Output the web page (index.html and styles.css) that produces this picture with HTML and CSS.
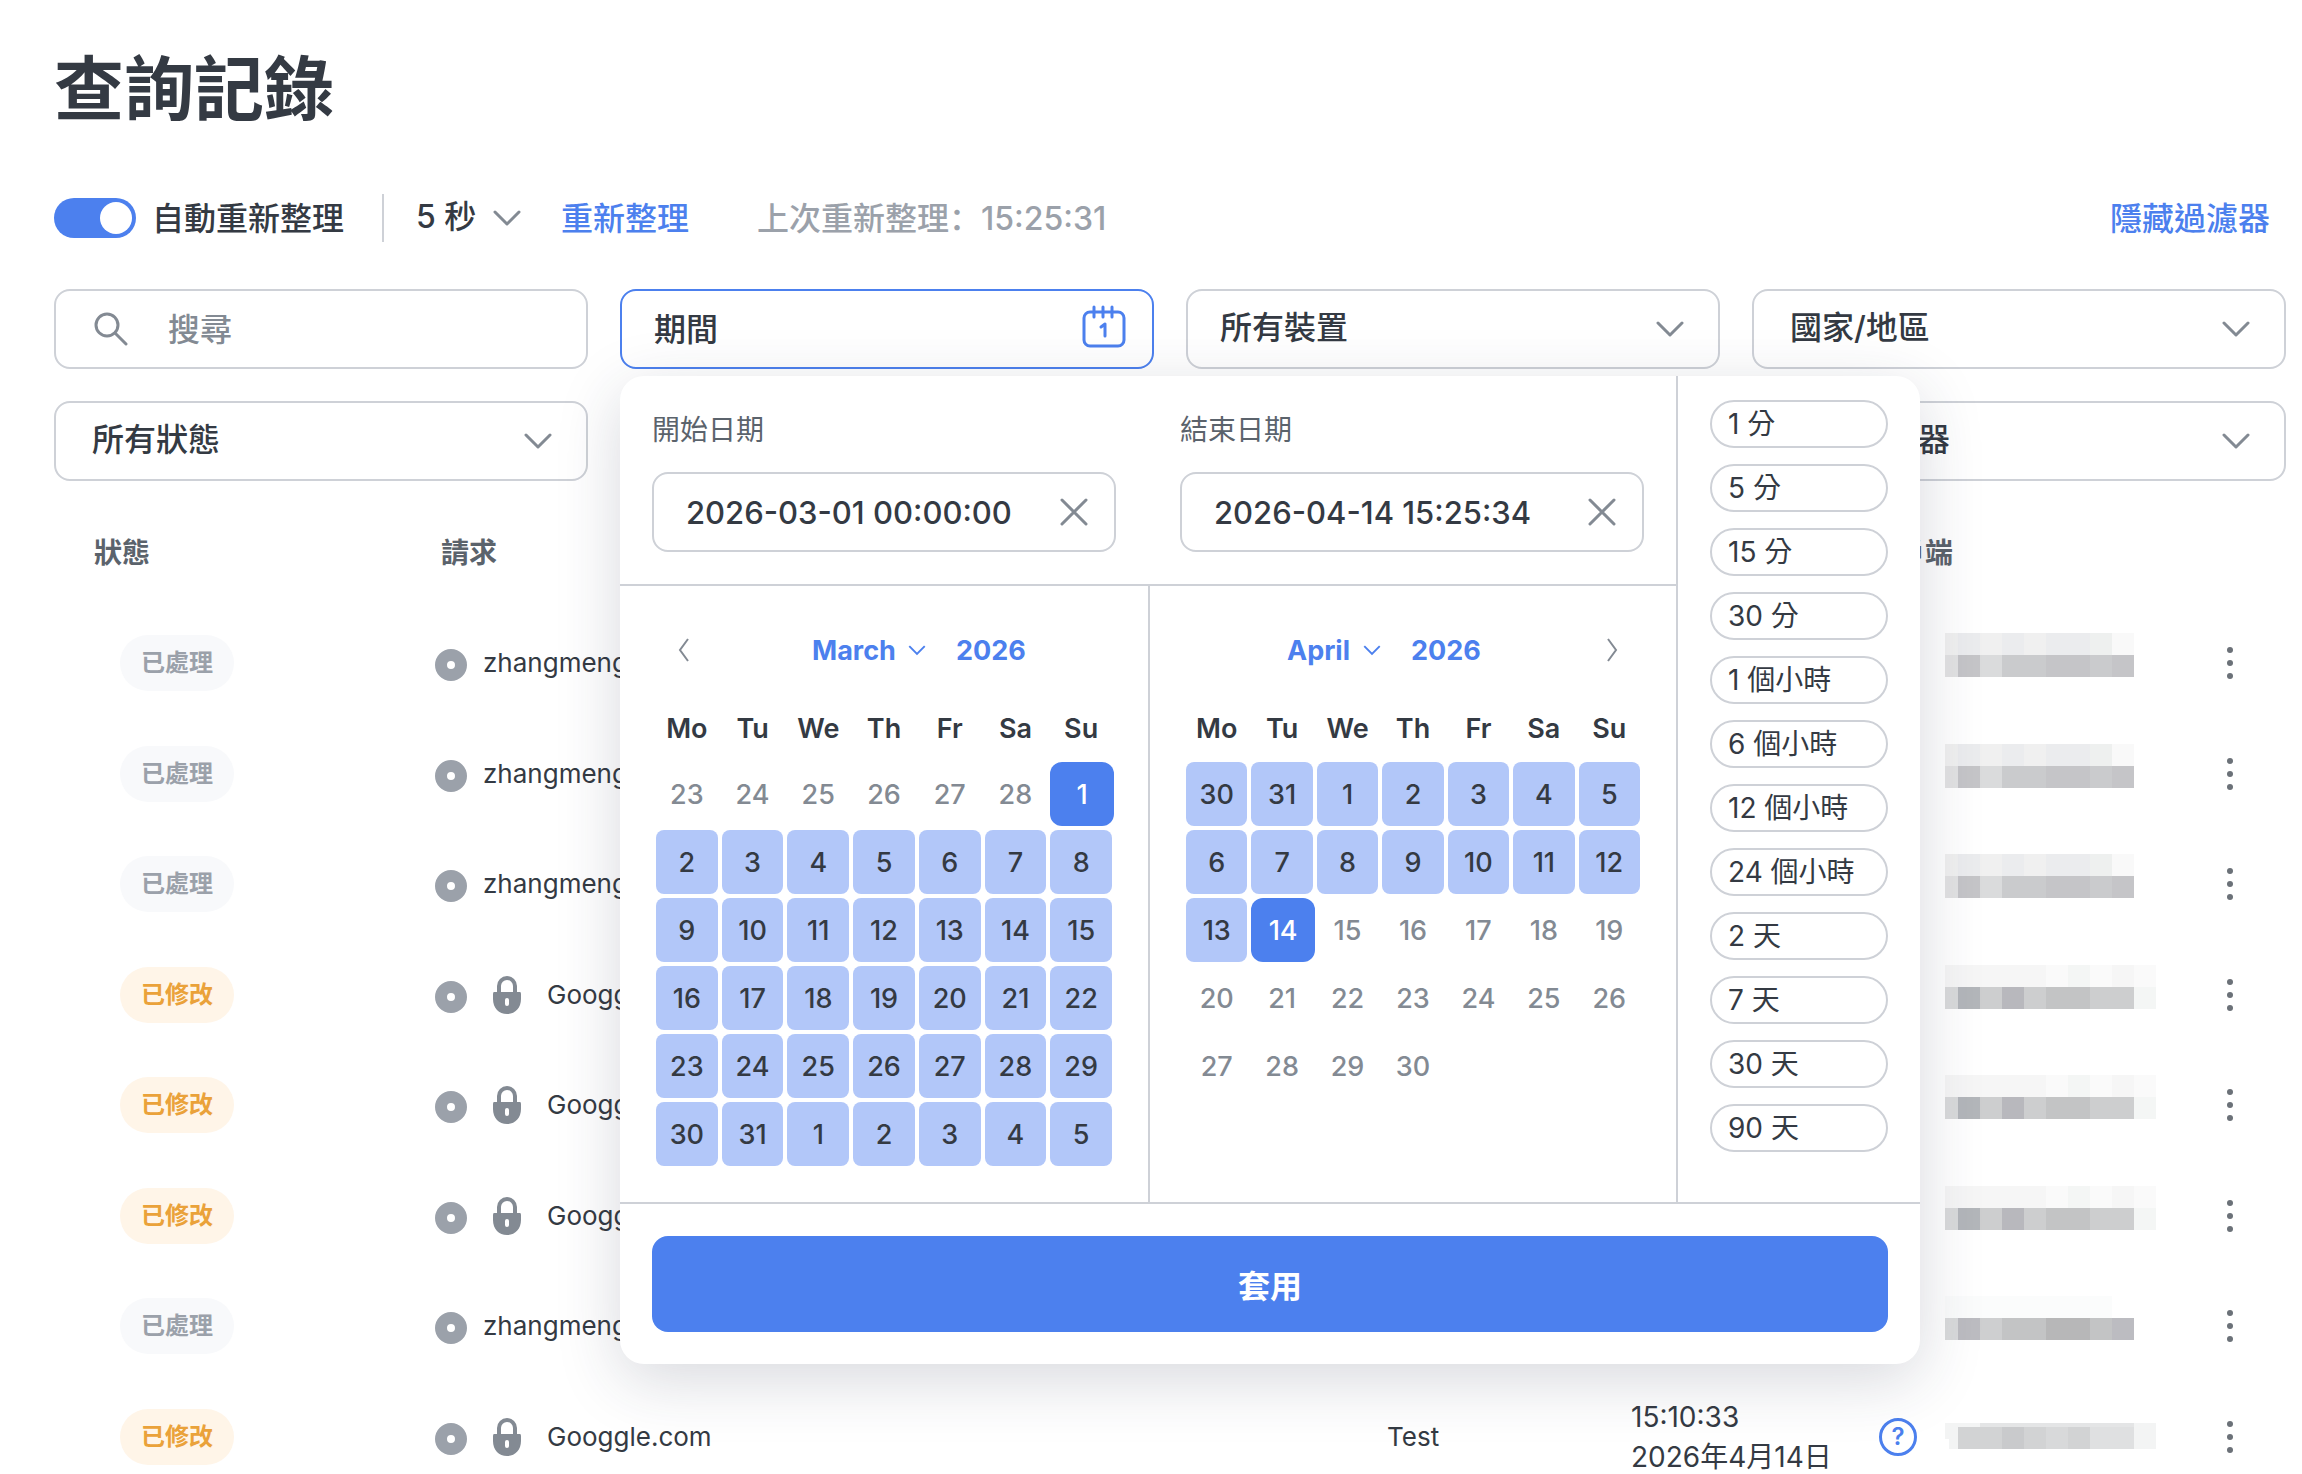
FILE: index.html
```html
<!DOCTYPE html>
<html lang="zh-Hant">
<head>
    <meta charset="UTF-8">
    <meta name="viewport" content="width=device-width, initial-scale=1.0">
    <title>查詢記錄</title>
    <link rel="stylesheet" href="styles.css">
</head>
<body>
    <!-- Shared icons -->
    <svg class="sprite" aria-hidden="true">
        <symbol id="chevron" viewBox="0 0 28 16"><path d="M2 2l12 12L26 2" /></symbol>
        <symbol id="close" viewBox="0 0 28 28"><path d="M2 2l24 24M26 2L2 26" /></symbol>
        <symbol id="site" viewBox="0 0 32 36">
            <path d="M16 4a16 16 0 1 0 0 32a16 16 0 1 0 0-32zM16 16a4 4 0 1 1 0 8a4 4 0 1 1 0-8z" />
        </symbol>
        <symbol id="lock" viewBox="0 0 28 38">
            <path class="shackle" d="M6 17V10a8 8 0 0 1 16 0v7" />
            <path d="M1 16h26q1 0 1 2v5c0 9-6 15-14 15S0 32 0 23v-5q0-2 1-2zM14 22a2 2 0 0 0-2 2v4a2 2 0 0 0 4 0v-4a2 2 0 0 0-2-2z" />
        </symbol>
        <symbol id="dots" viewBox="0 0 8 32">
            <circle cx="4" cy="3" r="3" /><circle cx="4" cy="16" r="3" /><circle cx="4" cy="29" r="3" />
        </symbol>
        <symbol id="mask-a" viewBox="0 0 211 60">
            <path fill="#f0f0f0" d="M0 0h13v22H0zM35 0h22v22H35zM79 0h22v22H79z" />
            <path fill="#ebecee" d="M13 0h22v22H13zM57 0h22v22H57zM101 0h44v22h-44z" />
            <path fill="#eef0ef" d="M145 0h22v22h-22z" />
            <path fill="#f9f9f9" d="M167 0h22v22h-22z" />
            <path fill="#e2e2e3" d="M0 22h13v22H0z" />
            <path fill="#dadbdc" d="M35 22h22v22H35z" />
            <path fill="#cacbcd" d="M57 22h44v22H57zM145 22h22v22h-22z" />
            <path fill="#c5c5c8" d="M13 22h22v22H13zM101 22h44v22h-44zM167 22h22v22h-22z" />
        </symbol>
        <symbol id="mask-b" viewBox="0 0 211 60">
            <path fill="#f6f6f6" d="M0 0h101v22H0zM167 0h22v22h-22z" />
            <path fill="#fafafa" d="M101 0h22v22h-22zM145 0h22v22h-22zM189 0h22v22h-22z" />
            <path fill="#f4f6f5" d="M123 0h22v22h-22zM189 22h22v22h-22z" />
            <path fill="#d9dadb" d="M0 22h13v22H0z" />
            <path fill="#b3b6ba" d="M13 22h22v22H13z" />
            <path fill="#cdcecf" d="M35 22h22v22H35zM79 22h22v22H79zM145 22h44v22h-44z" />
            <path fill="#b8b8bd" d="M57 22h22v22H57z" />
            <path fill="#c3c4c5" d="M101 22h44v22h-44z" />
        </symbol>
        <symbol id="mask-c" viewBox="0 0 211 60">
            <path fill="#fbfcfc" d="M0 0h167v22H0z" />
            <path fill="#d9dadb" d="M0 22h13v22H0z" />
            <path fill="#bcbcc1" d="M13 22h22v22H13zM167 22h22v22h-22z" />
            <path fill="#cecfd0" d="M35 22h22v22H35z" />
            <path fill="#c3c4c5" d="M57 22h44v22H57zM145 22h22v22h-22z" />
            <path fill="#b7b7b8" d="M101 22h44v22h-44z" />
        </symbol>
        <symbol id="mask-d" viewBox="0 0 211 60">
            <path fill="#f3f4f4" d="M0 16h211v26H4V32H0z" />
            <path fill="#e4e5e6" d="M35 16h154v4H35z" />
            <path fill="#d2d3d4" d="M13 20h44v22H13zM79 20h22v22H79zM123 20h22v22h-22z" />
            <path fill="#c9cacc" d="M57 20h22v22H57z" />
            <path fill="#d8d9da" d="M101 20h22v22h-22z" />
            <path fill="#dfe0e1" d="M145 20h44v22h-44z" />
        </symbol>
    </svg>

    <h1>查詢記錄</h1>

    <div class="toolbar">
        <label class="switch">
            <input type="checkbox" role="switch" checked>
            <span>自動重新整理</span>
        </label>
        <div class="interval">
            <select aria-label="間隔">
                <option>5 秒</option>
            </select>
            <svg class="chevron"><use href="#chevron" /></svg>
        </div>
        <a href="#" class="refresh">重新整理</a>
        <span class="updated" lang="zh-Hans">上次重新整理：15:25:31</span>
        <a href="#" class="hide-filters">隱藏過濾器</a>
    </div>

    <div class="filters">
        <label class="field search">
            <svg class="search-icon" viewBox="0 0 34 34"><circle cx="13" cy="13" r="11" /><path d="M21 21l11 11" /></svg>
            <input type="search" placeholder="搜尋" aria-label="搜尋">
        </label>

        <div class="period">
            <button type="button" class="field period-button">
                期間
                <svg class="calendar-icon" viewBox="0 0 44 44">
                    <rect x="2" y="7" width="40" height="34" rx="6" />
                    <path d="M12 2v10M21 2v10M30 2v10M19 22l4-3v12" />
                </svg>
            </button>

            <div class="popover">
                <div class="range">
                    <div class="dates">
                        <div class="date">
                            <label for="start">開始日期</label>
                            <div class="field date-field">
                                <input id="start" type="text" value="2026-03-01 00:00:00">
                                <button type="button" aria-label="清除"><svg class="close"><use href="#close" /></svg></button>
                            </div>
                        </div>
                        <div class="date">
                            <label for="end">結束日期</label>
                            <div class="field date-field">
                                <input id="end" type="text" value="2026-04-14 15:25:34">
                                <button type="button" aria-label="清除"><svg class="close"><use href="#close" /></svg></button>
                            </div>
                        </div>
                    </div>

                    <div class="months">
                        <section class="month">
                            <header>
                                <button type="button" class="arrow" aria-label="上個月"><svg viewBox="0 0 12 24"><path d="M10 1L2 12l8 11" /></svg></button>
                                <div class="month-title">
                                    <select aria-label="月"><option>March</option></select>
                                    <svg class="month-chevron"><use href="#chevron" /></svg>
                                    <input type="text" value="2026" aria-label="年">
                                </div>
                            </header>
                            <div class="weekdays"><span>Mo</span><span>Tu</span><span>We</span><span>Th</span><span>Fr</span><span>Sa</span><span>Su</span></div>
                            <div class="days">
                                <button class="out">23</button><button class="out">24</button><button class="out">25</button><button class="out">26</button><button class="out">27</button><button class="out">28</button><button class="picked">1</button>
                                <button>2</button><button>3</button><button>4</button><button>5</button><button>6</button><button>7</button><button>8</button>
                                <button>9</button><button>10</button><button>11</button><button>12</button><button>13</button><button>14</button><button>15</button>
                                <button>16</button><button>17</button><button>18</button><button>19</button><button>20</button><button>21</button><button>22</button>
                                <button>23</button><button>24</button><button>25</button><button>26</button><button>27</button><button>28</button><button>29</button>
                                <button>30</button><button>31</button><button>1</button><button>2</button><button>3</button><button>4</button><button>5</button>
                            </div>
                        </section>
                        <section class="month">
                            <header>
                                <div class="month-title">
                                    <select aria-label="月"><option>April</option></select>
                                    <svg class="month-chevron"><use href="#chevron" /></svg>
                                    <input type="text" value="2026" aria-label="年">
                                </div>
                                <button type="button" class="arrow" aria-label="下個月"><svg viewBox="0 0 12 24"><path d="M2 1l8 11-8 11" /></svg></button>
                            </header>
                            <div class="weekdays"><span>Mo</span><span>Tu</span><span>We</span><span>Th</span><span>Fr</span><span>Sa</span><span>Su</span></div>
                            <div class="days">
                                <button>30</button><button>31</button><button>1</button><button>2</button><button>3</button><button>4</button><button>5</button>
                                <button>6</button><button>7</button><button>8</button><button>9</button><button>10</button><button>11</button><button>12</button>
                                <button>13</button><button class="picked">14</button><button class="out">15</button><button class="out">16</button><button class="out">17</button><button class="out">18</button><button class="out">19</button>
                                <button class="out">20</button><button class="out">21</button><button class="out">22</button><button class="out">23</button><button class="out">24</button><button class="out">25</button><button class="out">26</button>
                                <button class="out">27</button><button class="out">28</button><button class="out">29</button><button class="out">30</button>
                            </div>
                        </section>
                    </div>
                </div>

                <div class="presets">
                    <button type="button">1 分</button>
                    <button type="button">5 分</button>
                    <button type="button">15 分</button>
                    <button type="button">30 分</button>
                    <button type="button">1 個小時</button>
                    <button type="button">6 個小時</button>
                    <button type="button">12 個小時</button>
                    <button type="button">24 個小時</button>
                    <button type="button">2 天</button>
                    <button type="button">7 天</button>
                    <button type="button">30 天</button>
                    <button type="button">90 天</button>
                </div>

                <div class="popover-footer">
                    <button type="button" class="apply">套用</button>
                </div>
            </div>
        </div>

        <div class="field select">
            <select aria-label="裝置"><option>所有裝置</option></select>
            <svg class="chevron"><use href="#chevron" /></svg>
        </div>
        <div class="field select wide-pad">
            <select aria-label="國家/地區"><option>國家/地區</option></select>
            <svg class="chevron"><use href="#chevron" /></svg>
        </div>
        <div class="field select wide-pad">
            <select aria-label="狀態"><option>所有狀態</option></select>
            <svg class="chevron"><use href="#chevron" /></svg>
        </div>
        <div class="field select wide-pad last-column">
            <select aria-label="過濾器"><option>所有過濾器</option></select>
            <svg class="chevron"><use href="#chevron" /></svg>
        </div>
    </div>

    <table class="log">
        <colgroup>
            <col class="col-status"><col><col class="col-device"><col class="col-time"><col class="col-client"><col class="col-menu">
        </colgroup>
        <thead>
            <tr><th>狀態</th><th>請求</th><th>裝置</th><th>時間</th><th>用戶端</th><th></th></tr>
        </thead>
        <tbody>
            <tr>
                <td><span class="badge">已處理</span></td>
                <td><div class="request"><svg class="site"><use href="#site" /></svg>zhangmeng</div></td>
                <td></td><td></td>
                <td><div class="client"><svg class="mask"><use href="#mask-a" /></svg></div></td>
                <td><button type="button" class="menu" aria-label="選單"><svg class="dots"><use href="#dots" /></svg></button></td>
            </tr>
            <tr>
                <td><span class="badge">已處理</span></td>
                <td><div class="request"><svg class="site"><use href="#site" /></svg>zhangmeng</div></td>
                <td></td><td></td>
                <td><div class="client"><svg class="mask"><use href="#mask-a" /></svg></div></td>
                <td><button type="button" class="menu" aria-label="選單"><svg class="dots"><use href="#dots" /></svg></button></td>
            </tr>
            <tr>
                <td><span class="badge">已處理</span></td>
                <td><div class="request"><svg class="site"><use href="#site" /></svg>zhangmeng</div></td>
                <td></td><td></td>
                <td><div class="client"><svg class="mask"><use href="#mask-a" /></svg></div></td>
                <td><button type="button" class="menu" aria-label="選單"><svg class="dots"><use href="#dots" /></svg></button></td>
            </tr>
            <tr>
                <td><span class="badge modified">已修改</span></td>
                <td><div class="request"><svg class="site"><use href="#site" /></svg><svg class="lock"><use href="#lock" /></svg>Googgle.com</div></td>
                <td></td><td></td>
                <td><div class="client"><svg class="mask"><use href="#mask-b" /></svg></div></td>
                <td><button type="button" class="menu" aria-label="選單"><svg class="dots"><use href="#dots" /></svg></button></td>
            </tr>
            <tr>
                <td><span class="badge modified">已修改</span></td>
                <td><div class="request"><svg class="site"><use href="#site" /></svg><svg class="lock"><use href="#lock" /></svg>Googgle.com</div></td>
                <td></td><td></td>
                <td><div class="client"><svg class="mask"><use href="#mask-b" /></svg></div></td>
                <td><button type="button" class="menu" aria-label="選單"><svg class="dots"><use href="#dots" /></svg></button></td>
            </tr>
            <tr>
                <td><span class="badge modified">已修改</span></td>
                <td><div class="request"><svg class="site"><use href="#site" /></svg><svg class="lock"><use href="#lock" /></svg>Googgle.com</div></td>
                <td></td><td></td>
                <td><div class="client"><svg class="mask"><use href="#mask-b" /></svg></div></td>
                <td><button type="button" class="menu" aria-label="選單"><svg class="dots"><use href="#dots" /></svg></button></td>
            </tr>
            <tr>
                <td><span class="badge">已處理</span></td>
                <td><div class="request"><svg class="site"><use href="#site" /></svg>zhangmeng</div></td>
                <td></td><td></td>
                <td><div class="client"><svg class="mask"><use href="#mask-c" /></svg></div></td>
                <td><button type="button" class="menu" aria-label="選單"><svg class="dots"><use href="#dots" /></svg></button></td>
            </tr>
            <tr>
                <td><span class="badge modified">已修改</span></td>
                <td><div class="request"><svg class="site"><use href="#site" /></svg><svg class="lock"><use href="#lock" /></svg>Googgle.com</div></td>
                <td>Test</td>
                <td class="time">15:10:33<br>2026年4月14日</td>
                <td><div class="client"><button type="button" class="help">?</button><svg class="mask"><use href="#mask-d" /></svg></div></td>
                <td><button type="button" class="menu" aria-label="選單"><svg class="dots"><use href="#dots" /></svg></button></td>
            </tr>
        </tbody>
    </table>
</body>
</html>
```
FILE: styles.css
```css
* {
    box-sizing: border-box;
}
body {
    margin: 0;
    height: 100vh;
    overflow: hidden;
    padding: 38px 16px 0 54px;
    font-family: Inter, "Noto Sans CJK TC", sans-serif;
    font-size: 32px;
    color: #343a43;
    background: #fff;
}
button, input, select {
    font: inherit;
    color: inherit;
    background: none;
    border: none;
    margin: 0;
    padding: 0;
    outline: none;
    appearance: none;
}
button, select {
    cursor: pointer;
}
a {
    color: #4c80ee;
    text-decoration: none;
}
svg {
    display: block;
    flex: none;
    fill: none;
    stroke: none;
}
.sprite {
    position: absolute;
    width: 0;
    height: 0;
}
h1 {
    margin: 0;
    font-size: 70px;
    line-height: 104px;
    font-weight: 700;
}

/* Toolbar */
.toolbar {
    display: flex;
    align-items: center;
    height: 48px;
    margin-top: 52px;
    font-weight: 500;
    white-space: nowrap;
}
.toolbar a,
.toolbar span,
.toolbar select {
    padding-bottom: 4px;
}
.switch {
    display: flex;
    align-items: center;
    gap: 16px;
}
.switch input {
    width: 82px;
    height: 40px;
    padding: 4px;
    border-radius: 20px;
    background: #ced1d7;
    cursor: pointer;
}
.switch input:checked {
    background: #4c80ee;
}
.switch input::before {
    content: "";
    display: block;
    width: 32px;
    height: 32px;
    border-radius: 50%;
    background: #fff;
}
.switch input:checked::before {
    margin-left: auto;
}
.interval {
    display: flex;
    align-items: center;
    gap: 16px;
    height: 48px;
    margin-left: 38px;
    padding-left: 32px;
    border-left: 2px solid #ced1d7;
}
.chevron {
    width: 28px;
    height: 16px;
    stroke: #838a93;
    stroke-width: 3;
    stroke-linecap: round;
    stroke-linejoin: round;
    pointer-events: none;
}
.refresh {
    margin-left: 40px;
}
.updated {
    margin-left: 68px;
    font-family: Inter, "Noto Sans CJK SC", sans-serif;
    color: #9ba1aa;
}
.hide-filters {
    margin-left: auto;
    margin-right: 16px;
}

/* Filters */
.filters {
    display: grid;
    grid-template-columns: repeat(4, minmax(0, 1fr));
    gap: 32px;
    margin-top: 47px;
}
.last-column {
    grid-column: 4;
}
.field {
    width: 100%;
    height: 80px;
    border: 2px solid #ced1d7;
    border-radius: 16px;
    font-weight: 500;
}
.search {
    display: flex;
    align-items: center;
    gap: 40px;
    padding: 0 38px;
}
.search input {
    flex: 1;
    min-width: 0;
}
.search input::placeholder {
    color: #838a93;
}
.search-icon {
    width: 34px;
    height: 34px;
    stroke: #838a93;
    stroke-width: 3;
    stroke-linecap: round;
}
.select {
    display: grid;
    align-items: center;
}
.select select,
.select .chevron {
    grid-area: 1 / 1;
}
.select select {
    height: 100%;
    padding: 0 80px 4px 32px;
}
.select .chevron {
    justify-self: end;
    margin-right: 34px;
}
.select.wide-pad select {
    padding-left: 36px;
}
.period {
    position: relative;
}
.period-button {
    display: flex;
    align-items: center;
    justify-content: space-between;
    padding: 0 26px 4px 32px;
    border-color: #4c80ee;
}
.calendar-icon {
    width: 44px;
    height: 44px;
    stroke: #4c80ee;
    stroke-width: 3;
    stroke-linecap: round;
    stroke-linejoin: round;
}

/* Date range popover */
.popover {
    position: absolute;
    z-index: 10;
    top: 87px;
    left: 0;
    display: grid;
    grid-template-columns: minmax(0, 1fr) 242px;
    width: 1300px;
    border-radius: 24px;
    background: #fff;
    box-shadow: 0 16px 64px rgba(40, 45, 70, 0.18);
}
.range {
    border-right: 2px solid #ced1d7;
}
.dates {
    display: grid;
    grid-template-columns: repeat(2, minmax(0, 1fr));
    gap: 64px;
    padding: 32px;
    border-bottom: 2px solid #ced1d7;
}
.date label {
    display: block;
    margin-bottom: 20px;
    font-size: 28px;
    line-height: 44px;
    color: #5b636c;
}
.date-field {
    display: flex;
    align-items: center;
    padding: 0 26px 0 32px;
}
.date-field input {
    flex: 1;
    min-width: 0;
    font-size: 31px;
}
.close {
    width: 28px;
    height: 28px;
    stroke: #838a93;
    stroke-width: 3;
    stroke-linecap: round;
}
.months {
    display: grid;
    grid-template-columns: repeat(2, minmax(0, 1fr));
    font-size: 27px;
    font-weight: 500;
}
.month {
    padding: 32px 36px 36px;
}
.month + .month {
    border-left: 2px solid #ced1d7;
}
.month header {
    display: flex;
    align-items: center;
    height: 64px;
}
.arrow {
    display: flex;
    justify-content: center;
    width: 56px;
}
.arrow:first-child {
    margin-right: 16px;
}
.arrow svg {
    width: 12px;
    height: 24px;
    stroke: #838a93;
    stroke-width: 2;
}
.month-title {
    flex: 1;
    display: flex;
    align-items: center;
    justify-content: center;
    gap: 12px;
    font-weight: 700;
    color: #4c80ee;
}
.month-title input {
    width: 72px;
    margin-left: 18px;
}
.month-chevron {
    width: 18px;
    height: 12px;
    stroke: #4c80ee;
    stroke-width: 3;
}
.weekdays,
.days {
    display: grid;
    grid-template-columns: repeat(7, minmax(0, 1fr));
    gap: 4px;
    text-align: center;
}
.weekdays {
    height: 80px;
    line-height: 94px;
    font-weight: 600;
}
.days button {
    height: 64px;
    border-radius: 8px;
    background: #b2c7f9;
}
.days .out {
    background: none;
    color: #838a93;
}
.days .picked {
    margin-right: -2px;
    border-radius: 12px;
    background: #4c80ee;
    color: #fff;
}
.presets {
    display: flex;
    flex-direction: column;
    gap: 16px;
    padding: 24px 32px;
}
.presets button {
    height: 48px;
    padding: 0 16px;
    border: 2px solid #ced1d7;
    border-radius: 24px;
    font-size: 28px;
    line-height: 40px;
    text-align: left;
}
.popover-footer {
    grid-column: 1 / -1;
    padding: 32px;
    border-top: 2px solid #ced1d7;
}
.apply {
    width: 100%;
    height: 96px;
    border-radius: 16px;
    background: #4c80ee;
    color: #fff;
    font-weight: 600;
}

/* Log table */
.log {
    width: 100%;
    margin-top: 16px;
    table-layout: fixed;
    border-collapse: collapse;
    font-size: 26px;
    line-height: 40px;
}
.col-status {
    width: 381px;
}
.col-device {
    width: 244px;
}
.col-time {
    width: 238px;
}
.col-client {
    width: 343px;
}
.col-menu {
    width: 74px;
}
.log th,
.log td {
    padding: 0;
    text-align: left;
}
.log th {
    height: 111px;
    font-size: 28px;
    font-weight: 600;
    color: #5b636c;
}
.log th:first-child {
    padding-left: 40px;
}
.log th:nth-child(2) {
    padding-left: 6px;
}
.log tbody tr {
    height: 110px;
}
.log tbody tr:nth-child(even) {
    height: 111px;
}
.log .time {
    font-size: 28px;
}
.badge {
    display: block;
    width: 114px;
    margin-left: 66px;
    border-radius: 28px;
    background: #f8f9fb;
    color: #9ba1aa;
    font-size: 24px;
    font-weight: 600;
    line-height: 56px;
    text-align: center;
}
.badge.modified {
    background: #fff5e8;
    color: #eaa23a;
}
.request {
    display: flex;
    align-items: center;
    gap: 16px;
}
.site {
    width: 32px;
    height: 36px;
    fill: #9ba1aa;
    fill-rule: evenodd;
}
.lock {
    width: 28px;
    height: 38px;
    margin: 0 10px;
    fill: #838a93;
    fill-rule: evenodd;
}
.shackle {
    fill: none;
    stroke: #838a93;
    stroke-width: 4;
}
.client {
    display: flex;
    align-items: center;
    justify-content: flex-end;
    margin-right: 56px;
    gap: 28px;
}
.help {
    width: 38px;
    height: 38px;
    border: 3px solid #4c80ee;
    border-radius: 50%;
    color: #4c80ee;
    font-size: 24px;
    font-weight: 600;
    line-height: 32px;
}
.mask {
    width: 211px;
    height: 60px;
}
.menu {
    display: flex;
    justify-content: center;
    width: 36px;
}
.dots {
    width: 8px;
    height: 32px;
    fill: #6b7178;
}
```
